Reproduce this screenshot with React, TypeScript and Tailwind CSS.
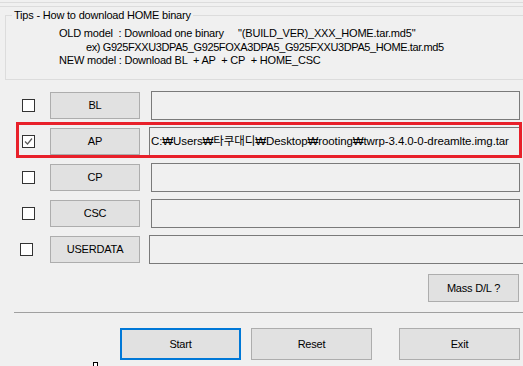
const ROWS = [
  { label: "BL", checked: false, path: "", box: "ml-[22px]", field: "ml-[11px] w-[369px]" },
  {
    label: "AP",
    checked: true,
    path: "C:₩Users₩타쿠대디₩Desktop₩rooting₩twrp-3.4.0-0-dreamlte.img.tar",
    box: "ml-[22px]",
    field: "ml-[9px] w-[371px]",
  },
  { label: "CP", checked: false, path: "", box: "ml-[22px]", field: "ml-[11px] w-[369px]" },
  { label: "CSC", checked: false, path: "", box: "ml-[22px]", field: "ml-[11px] w-[369px]" },
  { label: "USERDATA", checked: false, path: "", box: "ml-[20px]", field: "ml-[9px] w-[380px]" },
];

function CheckBox({ checked, className }: { checked: boolean; className: string }) {
  return (
    <div className={`${className} flex h-[13px] w-[13px] shrink-0 items-center justify-center border border-[#333333] bg-white`}>
      {checked && (
        <svg width="9" height="9" viewBox="0 0 9 9">
          <path d="M1 4.5 L3.5 7 L8 1.5" fill="none" stroke="#5a5a5a" strokeWidth="1.2" />
        </svg>
      )}
    </div>
  );
}

export default function App() {
  return (
    <div
      className="relative h-[366px] w-[523px] overflow-hidden bg-[#f0f0f0] text-[11px] tracking-[-0.2px] text-black"
      style={{ fontFamily: '"Liberation Sans", "Noto Sans CJK KR", sans-serif' }}
    >
      {/* top edge lines */}
      <div className="mt-[2px] h-px bg-[#dcdcdc]" />
      <div className="mt-[3px] h-px bg-[#dcdcdc]" />

      {/* tips group */}
      <fieldset className="ml-[5px] mt-px h-[72px] w-[540px] border border-[#dcdcdc]">
        <legend className="ml-[6px] px-[2px] leading-[14px]">Tips - How to download HOME binary</legend>
        <div className="pl-[53px] pt-[5px] leading-[13.5px]">
          <div className="whitespace-pre">OLD model  : Download one binary     "(BUILD_VER)_XXX_HOME.tar.md5"</div>
          <div className="pl-[27px] tracking-[-0.4px]">ex) G925FXXU3DPA5_G925FOXA3DPA5_G925FXXU3DPA5_HOME.tar.md5</div>
          <div className="whitespace-pre">NEW model : Download BL  + AP  + CP  + HOME_CSC</div>
        </div>
      </fieldset>

      {/* file rows */}
      <div className="mt-[11px] flex flex-col gap-[7px]">
        {ROWS.map((row) => (
          <div key={row.label} className="flex h-[29px] items-center">
            <CheckBox checked={row.checked} className={row.box} />
            <button
              className={`${row.label === "USERDATA" ? "ml-[17px]" : "ml-[15px]"} h-[27px] w-[90px] shrink-0 border border-[#adadad] bg-[#e1e1e1]`}
            >
              {row.label}
            </button>
            <div
              className={`${row.field} flex h-full shrink-0 items-center overflow-hidden border border-[#7a7a7a] bg-[#f0f0f0] px-px text-[11.5px] tracking-[-0.1px] whitespace-nowrap`}
            >
              {row.path}
            </div>
          </div>
        ))}
      </div>

      <div className="mt-[10px] flex justify-end pr-[4px]">
        <button className="h-[28px] w-[91px] border border-[#adadad] bg-[#e1e1e1]">Mass D/L ?</button>
      </div>

      <div className="ml-[14px] mt-[10px] h-px bg-[#a0a0a0]" />

      <div className="mt-[15px] flex items-center">
        <button className="ml-[120px] h-[32px] w-[121px] border-2 border-[#0078d7] bg-[#e1e1e1]">Start</button>
        <button className="ml-[10px] h-[32px] w-[121px] border border-[#adadad] bg-[#e1e1e1]">Reset</button>
        <button className="ml-[27px] h-[32px] w-[121px] border border-[#adadad] bg-[#e1e1e1]">Exit</button>
      </div>

      <div className="mt-[6px] h-[2px] bg-[#e3e3e3]" />

      {/* annotation highlight over the AP row */}
      <div className="pointer-events-none absolute left-[16px] top-[122px] h-[36px] w-[506px] border-[3px] border-[#e8202a]" />
      {/* resize grip */}
      <div className="absolute left-[93px] top-[362px] h-[6px] w-[5px] border border-black bg-white" />
    </div>
  );
}
